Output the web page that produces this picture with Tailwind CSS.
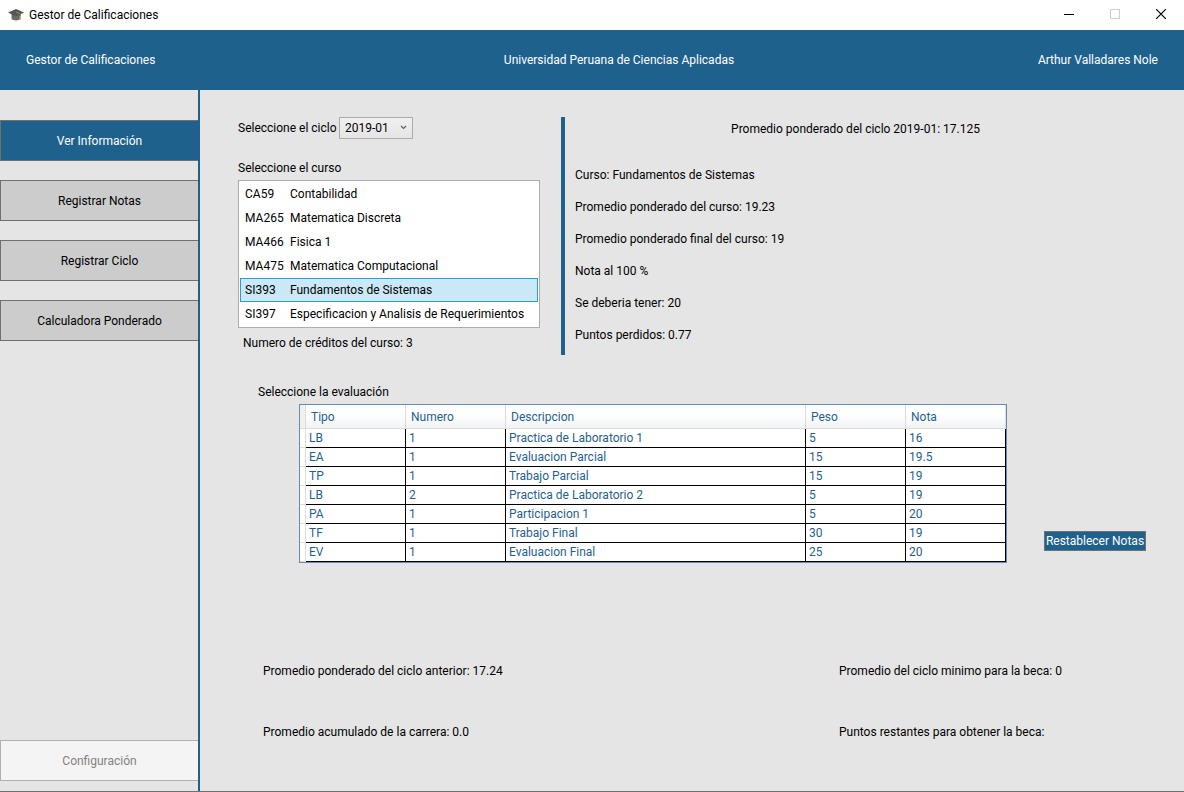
<!DOCTYPE html>
<html lang="es">
<head>
<meta charset="utf-8">
<meta name="viewport" content="width=device-width, initial-scale=1">
<title>Gestor de Calificaciones</title>
<script src="https://cdn.jsdelivr.net/npm/@tailwindcss/browser@4"></script>
</head>
<body class="flex min-h-screen flex-col bg-[#e5e5e5] font-['Segoe_UI',Roboto,sans-serif] text-[12px] leading-4 text-black">

  <!-- Window title bar -->
  <div class="flex h-[30px] shrink-0 items-center bg-white pl-2">
    <svg class="h-4 w-4" viewBox="0 0 16 16" aria-hidden="true">
      <path d="M3.500 7v5c2 1.800 6.500 2 9 0V7z" fill="#6a6a6a"/>
      <path d="M8 2 0 5.500 8 9.500l8-4z" fill="#565656"/>
      <path d="M8 5 12.500 7v4" fill="none" stroke="#a08a50" stroke-width="1"/>
      <path d="M11.500 9.500h1.500v3h-1.500z" fill="#d8b040"/>
    </svg>
    <span class="ml-[5px]">Gestor de Calificaciones</span>
    <div class="ml-auto flex h-7 self-start">
      <button type="button" aria-label="Minimizar" class="flex h-full w-[46px] items-center justify-center"><svg class="h-[10px] w-[10px]" viewBox="0 0 10 10"><path d="M0 5.500h10" stroke="#000"/></svg></button>
      <button type="button" aria-label="Maximizar" disabled class="flex h-full w-[46px] items-center justify-center"><svg class="h-[10px] w-[10px]" viewBox="0 0 10 10"><path d="M.5.5h9v9h-9z" fill="none" stroke="#ccc"/></svg></button>
      <button type="button" aria-label="Cerrar" class="flex h-full w-[46px] items-center justify-center"><svg class="h-[10px] w-[10px]" viewBox="0 0 10 10"><path d="M0 0l10 10M10 0 0 10" stroke="#000" stroke-width="1.200"/></svg></button>
    </div>
  </div>

  <header class="grid h-[60px] shrink-0 grid-cols-[1fr_auto_1fr] items-center bg-[#1f618d] px-[26px] text-white">
    <span>Gestor de Calificaciones</span>
    <h1 class="pl-[54px]">Universidad Peruana de Ciencias Aplicadas</h1>
    <span class="text-right">Arthur Valladares Nole</span>
  </header>

  <div class="flex flex-1 border-b border-[#707070]">
    <nav class="flex w-[200px] shrink-0 flex-col gap-[19px] border-r-2 border-[#1f618d] pt-[30px] pb-[10px]">
      <button type="button" class="h-[41px] border border-r-0 border-[#707070] bg-[#1f618d] text-white">Ver Información</button>
      <button type="button" class="h-[41px] border border-r-0 border-[#707070] bg-[#cccccc]">Registrar Notas</button>
      <button type="button" class="h-[41px] border border-r-0 border-[#707070] bg-[#cccccc]">Registrar Ciclo</button>
      <button type="button" class="h-[41px] border border-r-0 border-[#707070] bg-[#cccccc]">Calculadora Ponderado</button>
      <button type="button" disabled class="mt-auto h-[41px] border border-r-0 border-[#adb2b5] bg-[#f4f4f4] text-[#838383]">Configuración</button>
    </nav>

    <main class="flex-1 px-[38px] pt-[27px]">
      <div class="flex">
        <section class="w-[302px] shrink-0">
          <div class="flex items-center">
            <label for="ciclo" class="w-[101px] whitespace-nowrap">Seleccione el ciclo</label>
            <div class="relative">
              <select id="ciclo" class="block h-[22px] w-[74px] appearance-none border border-[#acacac] bg-linear-to-b from-[#f0f0f0] to-[#e5e5e5] pl-[5px]">
                <option>2019-01</option>
              </select>
              <svg class="pointer-events-none absolute top-2 right-[6px] h-[5px] w-[7px]" viewBox="0 0 7 5" aria-hidden="true"><path d="M1 1l2.500 2.500L6 1" fill="none" stroke="#606060" stroke-width="1.200"/></svg>
            </div>
          </div>
          <h2 id="curso" class="mt-[21px]">Seleccione el curso</h2>
          <ul role="listbox" aria-labelledby="curso" class="mt-1 border border-[#abadb3] bg-white p-px leading-[22px]">
            <li role="option" class="flex border border-transparent pl-1"><span class="w-[45px]">CA59</span><span>Contabilidad</span></li>
            <li role="option" class="flex border border-transparent pl-1"><span class="w-[45px]">MA265</span><span>Matematica Discreta</span></li>
            <li role="option" class="flex border border-transparent pl-1"><span class="w-[45px]">MA466</span><span>Fisica 1</span></li>
            <li role="option" class="flex border border-transparent pl-1"><span class="w-[45px]">MA475</span><span>Matematica Computacional</span></li>
            <li role="option" aria-selected="true" class="flex border border-[#26a0da] bg-[#cbe8f6] pl-1"><span class="w-[45px]">SI393</span><span>Fundamentos de Sistemas</span></li>
            <li role="option" class="flex border border-transparent pl-1"><span class="w-[45px]">SI397</span><span>Especificacion y Analisis de Requerimientos</span></li>
          </ul>
          <p class="mt-[7px] pl-[5px]">Numero de créditos del curso: 3</p>
        </section>

        <section class="ml-[21px] flex-1 border-l-4 border-[#1f618d] pt-1 pb-3">
          <p class="text-center">Promedio ponderado del ciclo 2019-01: 17.125</p>
          <div class="mt-[30px] flex flex-col gap-4 pl-[10px]">
            <p>Curso: Fundamentos de Sistemas</p>
            <p>Promedio ponderado del curso: 19.23</p>
            <p>Promedio ponderado final del curso: 19</p>
            <p>Nota al 100 %</p>
            <p>Se deberia tener: 20</p>
            <p>Puntos perdidos: 0.77</p>
          </div>
        </section>
      </div>

      <h2 id="evaluacion" class="mt-[29px] pl-5">Seleccione la evaluación</h2>
      <div class="mt-1 flex items-end justify-between pl-[61px]">
        <div class="border border-[#688caf] bg-white">
          <table aria-labelledby="evaluacion" class="w-[706px] table-fixed border-separate border-spacing-0 text-left text-[#1f618d]">
            <colgroup><col class="w-[6px]"><col class="w-[100px]"><col class="w-[100px]"><col class="w-[300px]"><col class="w-[100px]"><col class="w-[100px]"></colgroup>
            <thead>
              <tr class="h-6 bg-linear-to-b from-white from-40% to-[#f0f2f4]">
                <td class="border-r border-b border-[#dcdcdc] bg-[#f0f0f0] p-0"></td>
                <th class="border-r border-b border-[#dcdcdc] p-0 pl-[5px] font-normal">Tipo</th>
                <th class="border-r border-b border-[#dcdcdc] p-0 pl-[5px] font-normal">Numero</th>
                <th class="border-r border-b border-[#dcdcdc] p-0 pl-[5px] font-normal">Descripcion</th>
                <th class="border-r border-b border-[#dcdcdc] p-0 pl-[5px] font-normal">Peso</th>
                <th class="border-r border-b border-[#dcdcdc] p-0 pl-[5px] font-normal">Nota</th>
              </tr>
            </thead>
            <tbody class="[&_td]:border-r [&_td]:border-b [&_td]:border-black [&_td]:p-0 [&_td]:pl-[3px] [&_td:first-child]:border-[#dcdcdc] [&_tr]:h-[19px]">
              <tr><td></td><td>LB</td><td>1</td><td>Practica de Laboratorio 1</td><td>5</td><td>16</td></tr>
              <tr><td></td><td>EA</td><td>1</td><td>Evaluacion Parcial</td><td>15</td><td>19.5</td></tr>
              <tr><td></td><td>TP</td><td>1</td><td>Trabajo Parcial</td><td>15</td><td>19</td></tr>
              <tr><td></td><td>LB</td><td>2</td><td>Practica de Laboratorio 2</td><td>5</td><td>19</td></tr>
              <tr><td></td><td>PA</td><td>1</td><td>Participacion 1</td><td>5</td><td>20</td></tr>
              <tr><td></td><td>TF</td><td>1</td><td>Trabajo Final</td><td>30</td><td>19</td></tr>
              <tr><td></td><td>EV</td><td>1</td><td>Evaluacion Final</td><td>25</td><td>20</td></tr>
            </tbody>
          </table>
        </div>
        <button type="button" class="mb-3 h-5 w-[102px] border border-[#707070] bg-[#1f618d] leading-[18px] whitespace-nowrap text-white">Restablecer Notas</button>
      </div>

      <div class="mt-[100px] grid grid-cols-[1fr_307px] gap-y-[45px] pl-[25px]">
        <p>Promedio ponderado del ciclo anterior: 17.24</p>
        <p>Promedio del ciclo minimo para la beca: 0</p>
        <p>Promedio acumulado de la carrera: 0.0</p>
        <p>Puntos restantes para obtener la beca:</p>
      </div>
    </main>
  </div>
</body>
</html>
